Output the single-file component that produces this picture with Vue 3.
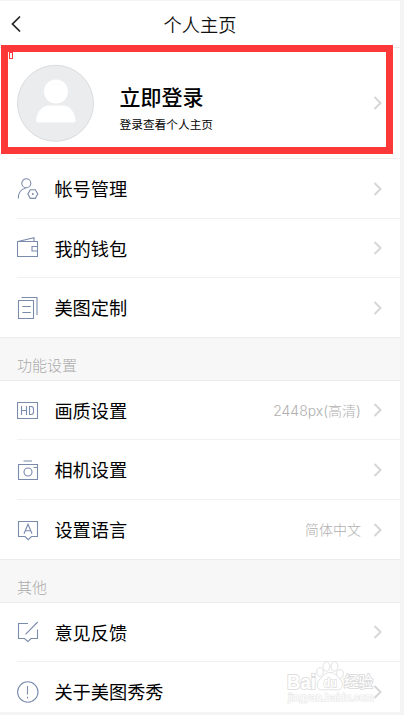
<script setup>
const groups = [
  {
    title: '',
    rows: [
      { icon: 'account', label: '帐号管理', h: 60 },
      { icon: 'wallet', label: '我的钱包', h: 59 },
      { icon: 'custom', label: '美图定制', h: 60 },
    ],
  },
  {
    title: '功能设置',
    rows: [
      { icon: 'hd', label: '画质设置', value: '2448px(高清)', h: 59 },
      { icon: 'camera', label: '相机设置', h: 60 },
      { icon: 'language', label: '设置语言', value: '简体中文', h: 60 },
    ],
  },
  {
    title: '其他',
    rows: [
      { icon: 'feedback', label: '意见反馈', h: 59 },
      { icon: 'about', label: '关于美图秀秀', h: 60 },
    ],
  },
]
</script>

<template>
  <div class="page">
    <main class="panel">
      <header class="header">
        <svg class="back" width="12" height="18" viewBox="0 0 12 18"><path d="M10 1.500 2.500 9 10 16.500" /></svg>
        <h1>个人主页</h1>
      </header>

      <section class="profile">
        <svg class="avatar" width="78" height="78" viewBox="0 0 78 78">
          <circle cx="39.500" cy="39.300" r="38" fill="#ebecee" stroke="#d9dbdc" />
          <circle cx="40" cy="27.500" r="12" fill="#fff" />
          <path d="M20 56.500C21 47.500 26 41.500 34 41.500H46C54 41.500 58.500 47.500 59.500 56.500Q59.500 58.500 57.500 58.500H22Q20 58.500 20 56.500Z" fill="#fff" />
        </svg>
        <div class="who">
          <strong>立即登录</strong>
          <span>登录查看个人主页</span>
        </div>
        <svg class="chevron" width="10" height="14" viewBox="0 0 10 14"><path d="M1.500 1 7.500 7 1.500 13" /></svg>
        <div class="highlight"><i></i></div>
      </section>

      <section v-for="(g, gi) in groups" :key="gi" class="group">
        <h2 v-if="g.title">{{ g.title }}</h2>
        <div v-for="r in g.rows" :key="r.icon" class="row" :style="{ height: r.h + 'px' }">
          <svg class="icon" width="22" height="24" viewBox="0 0 22 24">
            <template v-if="r.icon === 'account'">
              <circle cx="9.300" cy="6.300" r="4.500" />
              <path d="M1.300 21.500C1.300 16 4 11.800 8.500 11.200" />
              <path d="M13.300 12.800h5l2.500 4.300-2.500 4.300h-5l-2.500-4.300z" />
              <circle class="solid" cx="15.800" cy="17.100" r="1" />
            </template>
            <template v-else-if="r.icon === 'wallet'">
              <path d="M.5 5.500h20v15H.5zM1 5.500 17 1.700V5.500M20.500 10.500h-5.500v4.500h5.500" />
            </template>
            <template v-else-if="r.icon === 'custom'">
              <path d="M1.500 4.500h15v18h-15zM4.500 1.500h15.500v17.500M5.300 10.500h8.500M5.300 16.500h8.500" />
            </template>
            <template v-else-if="r.icon === 'hd'">
              <path d="M.5 4.500h20v16H.5z" />
              <path d="M4.500 8v9M9.500 8v9M4.500 12.500h5M12.500 8.500v8h1.500Q16.500 16.500 16.500 14v-3Q16.500 8.500 14 8.500z" />
            </template>
            <template v-else-if="r.icon === 'camera'">
              <path d="M1.500 6.500h19v15h-19zM6.500 3h8.500M16.500 9.500h4" />
              <circle cx="11" cy="14" r="4" />
            </template>
            <template v-else-if="r.icon === 'language'">
              <path d="M1.500 3.500h19v15h-6l-3.300 3.200L8 18.500H1.500z" />
              <path d="M7 15.800 11 6.200l4 9.600M8.300 12.800h5.400" />
            </template>
            <template v-else-if="r.icon === 'feedback'">
              <path d="M11 3.500H1.500v15h6l3.300 3 3.400-3h6.300v-9M8.500 14.300 20.700 2" />
            </template>
            <template v-else>
              <circle cx="10.800" cy="12" r="10.200" />
              <path d="M10.500 6v8.500M10.500 16.700v1.700" />
            </template>
          </svg>
          <div class="body">
            <span class="label">{{ r.label }}</span>
            <span v-if="r.value" class="value">{{ r.value }}</span>
            <svg class="chevron" width="10" height="14" viewBox="0 0 10 14"><path d="M1.500 1 7.500 7 1.500 13" /></svg>
          </div>
        </div>
      </section>
    </main>

    <svg class="watermark" width="92" height="48" viewBox="0 0 92 48">
      <g class="outlined">
        <text x="3" y="30" font-size="20" textLength="29" lengthAdjust="spacingAndGlyphs">Bai</text>
        <ellipse cx="36" cy="13" rx="3.300" ry="4.300" />
        <ellipse cx="42.500" cy="7.500" rx="3.500" ry="4.700" />
        <ellipse cx="50.500" cy="7.500" rx="3.500" ry="4.700" />
        <ellipse cx="56" cy="15" rx="3.300" ry="4.300" />
        <path d="M46 13.500C41 13.500 39.500 17 36 20C31.500 24 32.500 31 38 31Q46 30 53 31C59.500 31 59.500 24 56 20C52.500 17 51 13.500 46 13.500Z" />
        <text class="du" x="39.500" y="28" font-size="13" textLength="13.500" lengthAdjust="spacingAndGlyphs">du</text>
        <text class="cn" x="60" y="28" font-size="15" textLength="29" lengthAdjust="spacingAndGlyphs">经验</text>
        <text class="url" x="4" y="42" font-size="10" textLength="86" lengthAdjust="spacingAndGlyphs">jingyan.baidu.com</text>
      </g>
    </svg>
  </div>
</template>

<style>
body { background: #f4f4f4; overflow: hidden; }
</style>

<style scoped>
.page {
  position: relative;
  width: 404px;
  height: 715px;
  padding-top: 1px;
  box-sizing: border-box;
  background: #f4f4f4;
  overflow: hidden;
  font-family: "Noto Sans CJK SC", sans-serif;
  color: #000;
}
.panel { width: 400px; height: 711px; overflow: hidden; background: #fff; }
.header {
  height: 47px;
  box-sizing: border-box;
  border-bottom: 1px solid #ececec;
  display: grid;
  grid-template-columns: 40px 1fr 40px;
  align-items: center;
}
.back { margin-left: 10px; fill: none; stroke: #222; stroke-width: 1.7; }
.header h1 { margin: 0; font-size: 18.2px; line-height: 26px; font-weight: 350; text-align: center; color: #111; }
.profile {
  position: relative;
  display: flex;
  align-items: center;
  height: 111px;
  box-sizing: border-box;
  padding: 0 17px 1px 16px;
}
.avatar { flex: none; }
.who { display: flex; flex-direction: column; flex: 1; margin-left: 25.5px; padding-top: 8px; }
.who strong { font-size: 21px; line-height: 30px; font-weight: 500; }
.who span { font-size: 11.7px; line-height: 18px; margin-top: 4px; }
.chevron { flex: none; fill: none; stroke: #d6d6d6; stroke-width: 2; }
.highlight {
  position: absolute;
  left: 1px;
  top: -3px;
  width: 392px;
  height: 109px;
  box-sizing: border-box;
  border: 7px solid #fd3838;
}
.highlight i { display: block; width: 4px; height: 7px; margin-left: 1px; box-sizing: border-box; border: 1px solid #fd3838; }
.group h2 {
  margin: 0;
  height: 43px;
  box-sizing: border-box;
  padding: 13px 17px 0;
  border-bottom: 1px solid #ececec;
  background: #f7f7f7;
  font-size: 15px;
  line-height: 28px;
  font-weight: 300;
  color: #aaa;
}
.profile::after,
.row::after { content: ""; position: absolute; left: 17px; right: 0; bottom: 0; height: 1px; background: #f1f1f1; }
.row { position: relative; display: flex; align-items: center; padding: 0 0 1px 17px; box-sizing: border-box; }
.group:not(:last-child) .row:last-child::after { left: 0; background: #ececec; }
.icon { flex: none; fill: none; stroke: #7b8bab; stroke-width: 1.1; }
.icon .solid { fill: #7b8bab; stroke: none; }
.body {
  flex: 1;
  display: flex;
  align-items: center;
  height: 100%;
  margin-left: 15.4px;
  padding-right: 17px;
}
.label { flex: 1; font-size: 18.2px; line-height: 26px; padding-bottom: 1px; font-weight: 400; }
.value { margin-right: 12px; padding-bottom: 1px; font-family: Inter, "Noto Sans CJK SC", sans-serif; font-size: 14px; font-weight: 300; color: #b0b0b0; }
.watermark { position: absolute; left: 284px; top: 659px; }
.outlined { fill: #fff; stroke: #dedede; stroke-width: 0.9; }
.outlined text { font-family: "Liberation Sans", sans-serif; font-weight: 700; paint-order: stroke; stroke-width: 1.8; }
.outlined .du { fill: #fff; stroke-width: 1.500; }
.outlined .cn { font-family: "Noto Sans CJK SC", sans-serif; font-weight: 400; stroke-width: 2; }
.outlined .url { stroke: #e8e8e8; stroke-width: 1.2; font-weight: 400; }
</style>
